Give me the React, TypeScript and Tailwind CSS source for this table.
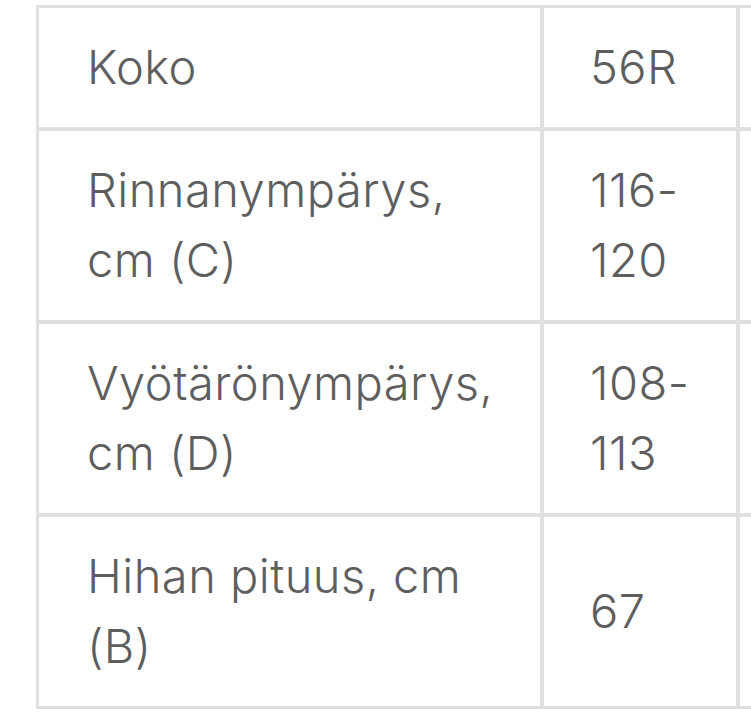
const rows: [string, string][] = [
  ['Koko', '56R'],
  ['Rinnanympärys, cm (C)', '116-120'],
  ['Vyötärönympärys, cm (D)', '108-113'],
  ['Hihan pituus, cm (B)', '67'],
]

export default function App() {
  return (
    <div className="w-[751px] h-[720px] overflow-hidden bg-white pl-[36px] pt-[5px]" style={{ fontFamily: 'Inter, "Noto Sans", sans-serif' }}>
      <div className="w-[900px] border-l-[3px] border-t-[3px] border-[#e0e0e0] text-[47px] font-light tracking-[0.01em] leading-[1.5] text-[#5e5e5e]">
        {rows.map(([label, value], i) => (
          <div key={label} className={`flex ${i === rows.length - 1 ? 'border-b-[3px]' : 'border-b-4'} border-[#e0e0e0]`}>
            <div className="w-[505px] shrink-0 border-r-4 border-[#e0e0e0] px-[48px] py-[24px] flex items-center">
              {label}
            </div>
            <div className="w-[196px] shrink-0 border-r-4 border-[#e0e0e0] pl-[46px] pr-[40px] py-[24px] flex items-center">
              {value}
            </div>
            <div className="flex-1" />
          </div>
        ))}
      </div>
    </div>
  )
}
